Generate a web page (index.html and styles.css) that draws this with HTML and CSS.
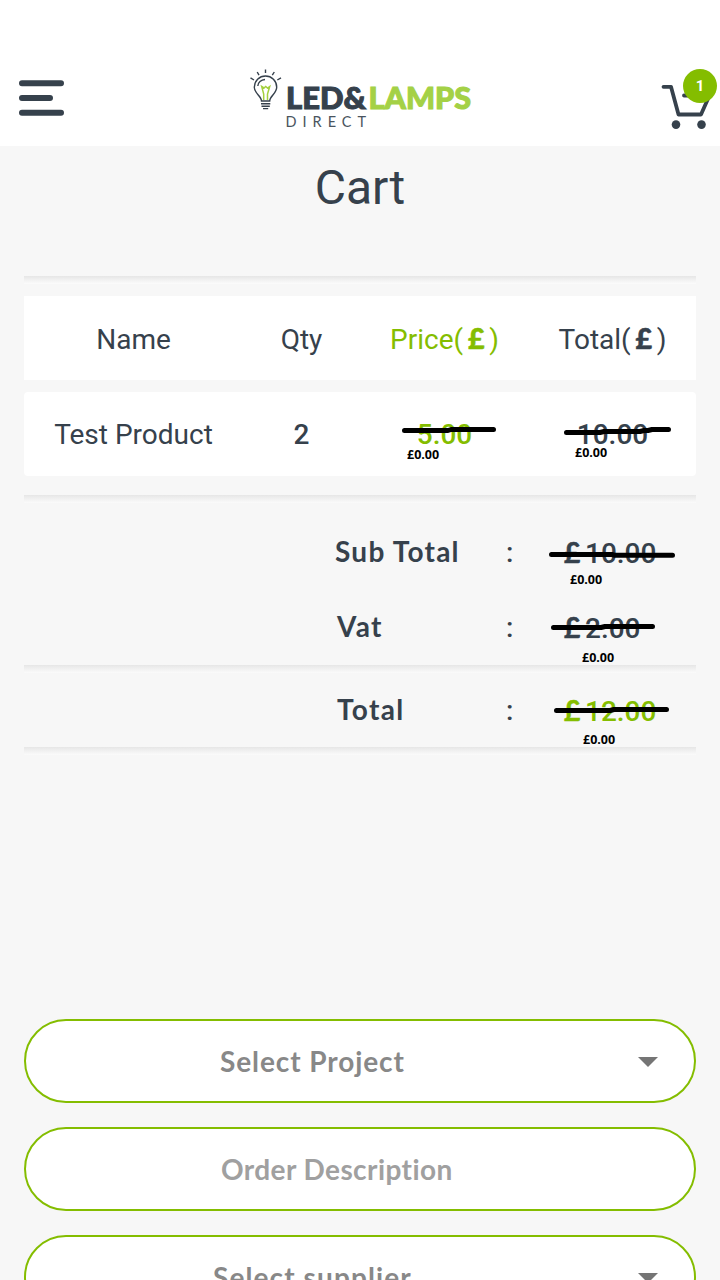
FILE: index.html
```html
<!DOCTYPE html>
<html lang="en">
<head>
<meta charset="utf-8">
<title>Cart</title>
<link rel="stylesheet" href="styles.css">
</head>
<body>
<header class="topbar">
  <svg class="menu" width="48" height="40" viewBox="0 0 48 40"><path d="M4 5.2H43M4 20H32M4 34.800H43"/></svg>
  <svg class="logo" width="240" height="76" viewBox="0 0 240 76">
    <g class="rays"><path d="M25.5 9.500V13M17.200 12L19 15.200M34.300 12L32.300 15.200M10.500 17.800L14 20M41 17.800L37.300 20"/></g>
    <g class="bulb"><path d="M21.500 41C21.500 36 14.300 33.500 14.300 27.200A11.200 11.200 0 0 1 36.700 27.200C36.700 33.500 29.700 36 29.700 41Z"/><path d="M17.800 26C18 22.500 21 19.700 25 19.500M21 43.800H30.300M21.500 46.300H29.800M23 48.600H28.200"/></g>
    <path class="filament" d="M23.700 40V34L21.700 26.500L24 28L25.700 26.500L27.500 28L29.700 26.500L27.500 34V40"/>
    <text class="brand" x="46" y="48.700" textLength="80" lengthAdjust="spacingAndGlyphs">LED&amp;</text>
    <text class="brand lime" x="128.500" y="48.700" textLength="102.500" lengthAdjust="spacingAndGlyphs">LAMPS</text>
    <text class="direct" x="45.500" y="66.500" textLength="80.500">DIRECT</text>
  </svg>
  <div class="cart">
    <svg width="60" height="68" viewBox="0 0 60 68"><path class="frame" d="M3.500 20.800H11L18.500 48.500H41L51 26M24 29.500H48"/><circle cx="16" cy="58.600" r="4.300"/><circle cx="41.500" cy="58.600" r="4.300"/></svg>
    <span class="badge">1</span>
  </div>
</header>
<main>
  <h1>Cart</h1>
  <div class="rule"></div>
  <div class="row head">
    <span>Name</span><span>Qty</span><span class="green">Price(<b class="pound">£</b>)</span><span>Total(<b class="pound">£</b>)</span>
  </div>
  <div class="row item">
    <span>Test Product</span><b>2</b>
    <div class="cell green"><b>5.00</b><svg class="strike"><path d="M44.500 38.500H88L91 37.500H133.500"/></svg><i class="note n1">£0.00</i></div>
    <div class="cell"><b>10.00</b><svg class="strike"><path d="M38.500 40.500H72L76 39.500H112L116 38.500H120L124 37.500H140.500"/></svg><i class="note n2">£0.00</i></div>
  </div>
  <div class="rule after-item"></div>
  <section class="summary">
    <div class="sum"><span class="label sub">Sub Total</span><span class="colon">:</span><div class="value"><b class="pound">£</b><b>10.00</b><svg class="strike"><path d="M-11.500 39.500H49L52 40.300H109.500"/></svg><i class="note n3">£0.00</i></div></div>
    <div class="sum"><span class="label">Vat</span><span class="colon">:</span><div class="value"><b class="pound">£</b><b>2.00</b><svg class="strike"><path d="M-9.500 37.500H38L42 36.500H89.500"/></svg><i class="note n4">£0.00</i></div></div>
    <div class="rule"></div>
    <div class="sum last"><span class="label">Total</span><span class="colon">:</span><div class="value green"><b class="pound">£</b><b>12.00</b><svg class="strike"><path d="M-6.500 37.500H47L51 36.500H103.500"/></svg><i class="note n5">£0.00</i></div></div>
    <div class="rule"></div>
  </section>
  <section class="fields">
    <div class="field"><span class="project">Select Project</span><svg class="caret" width="20" height="10"><path d="M0 0H20L10 10Z"/></svg></div>
    <div class="field"><span class="description">Order Description</span></div>
    <div class="field"><span class="supplier">Select supplier</span><svg class="caret" width="20" height="10"><path d="M0 0H20L10 10Z"/></svg></div>
  </section>
</main>
</body>
</html>
```
FILE: styles.css
```css
* { box-sizing: border-box; }
body {
  margin: 0;
  height: 1280px;
  overflow: hidden;
  background: #f7f7f7;
  color: #36414c;
  font: 28px/1 Roboto, sans-serif;
}
b { font-weight: 500; }
.topbar {
  height: 146px;
  padding: 60px 0 0 18px;
  background: #fff;
  display: flex;
  align-items: flex-start;
}
.menu { margin-top: 18px; margin-right: 174px; fill: none; stroke: #36414c; stroke-width: 6; stroke-linecap: round; }
.rays, .bulb { fill: none; stroke: #36414c; stroke-width: 1.4; }
.filament { fill: none; stroke: #a4d03e; stroke-width: 1.5; }
.brand { font: 900 29.5px Lato, sans-serif; fill: #36414c; stroke: #36414c; stroke-width: 1; }
.brand.lime { fill: #a4d146; stroke: #a4d146; }
.direct { font: 400 14.5px Lato, sans-serif; fill: #4a545e; }
.cart { position: relative; width: 60px; height: 76px; margin-left: 180px; padding-top: 6px; fill: #36414c; }
.cart svg { display: block; }
.frame { fill: none; stroke: #36414c; stroke-width: 3.8; stroke-linejoin: round; stroke-linecap: round; }
.badge {
  position: absolute; left: 23px; top: 9px;
  width: 34px; height: 34px; border-radius: 50%;
  background: #84bd00; color: #fff;
  font: 700 15px/34px Roboto, sans-serif; text-align: center;
}
main { padding: 0 24px; }
h1 { margin: 0; height: 130px; padding-top: 14px; text-align: center; font-size: 48px; font-weight: 400; line-height: 56px; }
.rule { height: 8px; background: linear-gradient(#e6e6e6, #efefef 40%, #fbfbfb); }
.row {
  display: grid;
  grid-template-columns: 219px 117px 168px 168px;
  height: 84px;
  background: #fff;
  align-items: center;
  text-align: center;
}
.row > span, .row > b { line-height: 84px; height: 84px; }
.head { margin-top: 12px; padding-top: 2px; }
.item { margin-top: 12px; border-radius: 4px; }
.item > span, .item > b { padding-top: 1px; }
.green { color: #84bd00; }
.pound { display: inline-block; width: 18px; margin: 0 4px; font: 900 28.5px/1 Lato, sans-serif; text-align: center; -webkit-text-stroke: 0.5px currentColor; }
.head .green, .head span:last-child { padding-left: 1px; }
.cell { position: relative; height: 84px; line-height: 86px; padding-left: 1px; }
.strike { position: absolute; left: 0; top: 0; width: 168px; height: 84px; overflow: visible; fill: none; stroke: #000; stroke-width: 5; stroke-linecap: round; stroke-linejoin: round; }
.note { position: absolute; font: 700 12.5px/16px "Open Sans", sans-serif; color: #000; }
.n1 { left: 47px; top: 55px; }
.n2 { left: 47px; top: 53px; }
.n3 { left: 7px; top: 57px; }
.n4 { left: 19px; top: 60px; }
.n5 { left: 20px; top: 59px; }
.after-item { margin: 19px 0 12px; }
.sum { display: grid; grid-template-columns: 169px 57px 1fr; height: 75px; padding-left: 313px; }
.sum.last { height: 74px; }
.label { font: 700 28px/73px Lato, sans-serif; letter-spacing: 1.35px; }
.label.sub { margin-left: -2px; letter-spacing: 1.25px; }
.colon { line-height: 76px; font-weight: 500; }
.value { position: relative; line-height: 78px; }
.value .pound { margin: 0 4px 0 0; font-weight: 700; }
.fields { display: grid; gap: 24px; margin-top: 264px; }
.field {
  display: flex; align-items: center;
  height: 84px; border: 2px solid #84bd00; border-radius: 42px;
  background: #fff; color: #888;
  font: 700 28px/80px Lato, sans-serif;
  padding: 0 36px 0 194px;
  letter-spacing: 0.9px;
}
.caret { margin-left: auto; margin-top: 2px; fill: #757575; }
.description { color: #a0a0a0; letter-spacing: 0.42px; padding-left: 1px; line-height: 78px; }
.supplier { margin-left: -7px; letter-spacing: 1.1px; }
```
